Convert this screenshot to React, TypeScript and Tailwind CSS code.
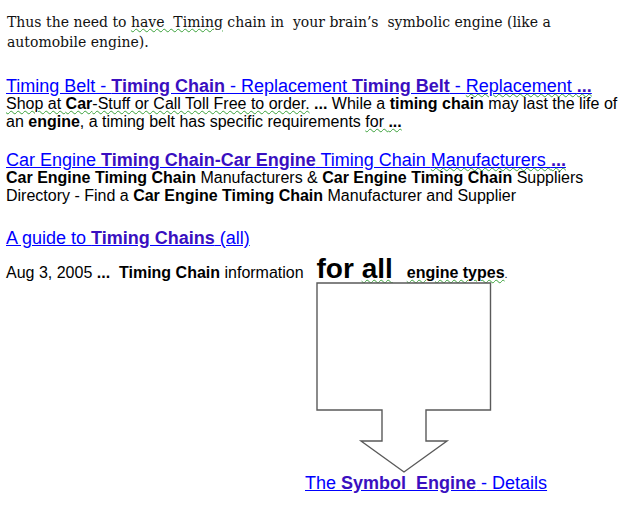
import React from "react";

const B = ({ children }: { children: React.ReactNode }) => (
  <b className="font-bold text-[#3a0fc0]">{children}</b>
);
const K = ({ children }: { children: React.ReactNode }) => (
  <b className="font-bold">{children}</b>
);
const W = ({ children }: { children: React.ReactNode }) => (
  <span className="underline decoration-wavy decoration-[#3aa13a] decoration-1 underline-offset-[1px]">
    {children}
  </span>
);

export default function App() {
  return (
    <div className="w-[625px] h-[529px] bg-white text-black overflow-hidden pl-[6px]">
      <div
        className="pt-[12px] pl-[1px] text-[14px] leading-[20px] whitespace-pre text-[#111]"
        style={{ fontFamily: '"DejaVu Serif", serif' }}
      >
        <div>
          Thus the need to <W>have  Timing</W> chain in  your brain’s  symbolic engine (like a
        </div>
        <div>automobile engine).</div>
      </div>

      <div
        className="text-[16px] leading-[18px] whitespace-pre"
        style={{ fontFamily: '"Liberation Sans", Arial, sans-serif' }}
      >
        <div className="mt-[25px]">
          <div className="text-[18px] text-[#0000ff] underline decoration-[#0000ff]">
            Timing Belt - <B>Timing Chain</B> - Replacement <B>Timing Belt</B> - <W>Replacement <B>...</B></W>
          </div>
          <div>
            <W>Shop at <K>Car</K>-Stuff or Call Toll Free to order.</W> <K>...</K> While a <K>timing chain</K> may last the life of
          </div>
          <div>
            an <K>engine</K>, a timing belt has specific requirements <W>for <K>...</K></W>
          </div>
        </div>

        <div className="mt-[20px]">
          <div className="text-[18px] text-[#0000ff] underline decoration-[#0000ff]">
            Car Engine <B>Timing Chain-Car Engine</B> Timing Chain <W>Manufacturers <B>...</B></W>
          </div>
          <div>
            <K>Car Engine Timing Chain</K> Manufacturers &amp; <K>Car Engine Timing Chain</K> Suppliers
          </div>
          <div>
            Directory - Find a <K>Car Engine Timing Chain</K> Manufacturer and Supplier
          </div>
        </div>

        <div className="mt-[24px]">
          <div className="text-[18px] text-[#0000ff] underline decoration-[#0000ff]">
            A guide to <B>Timing Chains</B> (all)
          </div>
          <div className="mt-[12px] h-[20px] flex items-baseline">
            <span>Aug 3, 2005 <K>...</K>  <K>Timing Chain</K> information  </span>
            <span className="text-[28px] font-bold leading-[20px] ml-[4px]">
              for <W>all</W>
            </span>
            <span className="text-[16px] font-bold ml-[14px]">
              <W>engine types</W>
            </span>
            <span className="text-[11px]">.</span>
          </div>
        </div>

        <div className="ml-[309px] mt-[2px]">
          <svg width="180" height="193" viewBox="0 0 180 193" className="block">
            <path
              d="M2 2 H175.5 V129 H111 V160 H132 L89 191 L46 160 H67 V129 H2 Z"
              fill="white"
              stroke="#5a5a5a"
              strokeWidth="1.4"
            />
          </svg>
        </div>

        <div className="ml-[299px] text-[18px] text-[#0000ff] underline decoration-[#0000ff]">
          The <B>Symbol  Engine</B> - Details
        </div>
      </div>
    </div>
  );
}
